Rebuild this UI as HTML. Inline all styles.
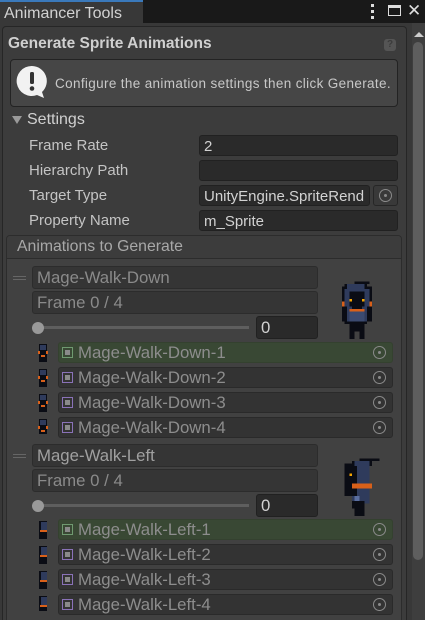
<!DOCTYPE html>
<html style="width:425px;height:620px;overflow:hidden"><head><style>
*{box-sizing:border-box;margin:0;padding:0}
body{width:425px;height:620px;background:#383838;font-family:"Liberation Sans",sans-serif;color:#c4c4c4;position:relative;overflow:hidden;font-size:14px}
.abs{position:absolute}
.tabbar{left:0;top:0;width:425px;height:23px;background:#191919}
.tab{left:0;top:0;width:143px;height:23px;background:#383838;border-top:2px solid #3a79bb;font-size:16px;color:#d2d2d2;padding:3px 0 0 4px}
.fld{position:absolute;background:#2a2a2a;border:1px solid #212121;border-radius:3px;color:#d2d2d2;font-size:15px;padding:2px 0 0 4px;height:21px;white-space:nowrap;overflow:hidden}
.lbl{position:absolute;left:29px;font-size:15px;color:#c4c4c4}
.dis{background:#353535;border-color:#2c2c2c;color:#8a8a8a}
.row{position:absolute;left:58px;width:335px;height:21px;border-radius:3px;background:#333;border:1px solid #2a2a2a;color:#8d8d8d;font-size:16.8px;padding:0 0 0 19px;line-height:19px}
.row.g{background:#394834;border-color:#34412f}
.row .ic{position:absolute;left:3px;top:4px;width:11px;height:11px;border:1px solid #8a72b8}
.row .ic:after{content:"";position:absolute;left:2px;top:2px;width:5px;height:5px;background:#8a8a8a}
.row.g .ic{border-color:#6f9a70}
.tgt{position:absolute;right:6px;top:3px;width:13px;height:13px;border:1.5px solid #8a8a8a;border-radius:50%}
.tgt:after{content:"";position:absolute;left:3.5px;top:3.5px;width:3px;height:3px;background:#8a8a8a;border-radius:50%}
</style></head><body>
<div class="abs tabbar"></div>
<div class="abs tab">Animancer Tools</div>
<div class="abs" style="left:371px;top:4px;width:3px;height:15px;background:repeating-linear-gradient(#ddd 0 3px,transparent 3px 6px)"></div>
<div class="abs" style="left:388px;top:5px;width:13px;height:11px;border:1.5px solid #ddd;border-top-width:3px"></div>
<div class="abs" style="left:407px;top:1px;font-size:17px;color:#ddd">✕</div>

<div class="abs" style="left:2px;top:26px;width:405px;height:594px;background:#3c3c3c;border:1px solid #262626;border-bottom:none;border-radius:4px 4px 0 0"></div>
<div class="abs" style="left:412px;top:23px;width:13px;height:597px;background:#3e3e3e"></div>
<div class="abs" style="left:414px;top:32px;width:0;height:0;border-left:5px solid transparent;border-right:5px solid transparent;border-bottom:5px solid #ccc"></div>
<div class="abs" style="left:413px;top:42px;width:10px;height:518px;background:#5e5e5e;border-radius:5px"></div>

<div class="abs" style="left:8px;top:35px;font-weight:bold;font-size:15.5px;color:#d0d0d0">Generate Sprite Animations</div>
<div class="abs" style="left:384px;top:39px;width:12px;height:12px;border-radius:3px;background:#555;color:#3c3c3c;font-size:10px;text-align:center;font-weight:bold">?</div>

<div class="abs" style="left:10px;top:59px;width:388px;height:48px;background:#464646;border:1px solid #232323;border-radius:4px"></div>
<svg class="abs" style="left:16px;top:65px" width="34" height="36" viewBox="0 0 34 36"><path d="M16 1a15 15 0 1 0 5 29l7 3-2-6A15 15 0 0 0 16 1z" fill="#f2f2f2"/><rect x="14" y="7" width="4" height="12" rx="1.5" fill="#333"/><circle cx="16" cy="23.5" r="2.3" fill="#333"/></svg>
<div class="abs" style="left:55px;top:76px;font-size:13.5px;letter-spacing:0.35px;color:#c8c8c8">Configure the animation settings then click Generate.</div>

<div class="abs" style="left:12px;top:116px;width:0;height:0;border-left:5px solid transparent;border-right:5px solid transparent;border-top:8px solid #9a9a9a"></div>
<div class="abs" style="left:27px;top:111px;font-size:16px;color:#d0d0d0">Settings</div>

<div class="lbl" style="top:137px">Frame Rate</div><div class="fld" style="left:199px;top:135px;width:199px">2</div>
<div class="lbl" style="top:162px">Hierarchy Path</div><div class="fld" style="left:199px;top:160px;width:199px"></div>
<div class="lbl" style="top:187px">Target Type</div><div class="fld" style="left:199px;top:185px;width:171px">UnityEngine.SpriteRend</div>
<div class="abs" style="left:373px;top:185px;width:25px;height:21px;background:#393939;border:1px solid #262626;border-radius:3px"><div class="tgt" style="right:5px;top:3px"></div></div>
<div class="lbl" style="top:212px">Property Name</div><div class="fld" style="left:199px;top:210px;width:199px">m_Sprite</div>

<div class="abs" style="left:6px;top:235px;width:396px;height:385px;background:#414141;border:1px solid #2c2c2c;border-bottom:none;border-radius:4px 4px 0 0"></div>
<div class="abs" style="left:7px;top:236px;width:394px;height:23px;background:#3c3c3c;border-bottom:1px solid #2c2c2c;border-radius:4px 4px 0 0;padding:2px 0 0 10px;font-size:15.8px;color:#a8a8a8">Animations to Generate</div>

<div class="abs" style="left:13px;top:276px;width:13px;height:4px;border-top:1px solid #666;border-bottom:1px solid #666"></div>
<div class="fld dis" style="left:32px;top:266px;width:286px;height:23px;font-size:16.8px;padding-top:1px">Mage-Walk-Down</div>
<div class="fld dis" style="left:32px;top:291px;width:286px;height:23px;font-size:16.8px;padding-top:1px">Frame 0 / 4</div>
<div class="abs" style="left:38px;top:326px;width:211px;height:3px;background:#5e5e5e"></div>
<div class="abs" style="left:32px;top:322px;width:12px;height:12px;border-radius:50%;background:#999"></div>
<div class="fld" style="left:256px;top:316px;width:62px;height:23px;font-size:16.8px;padding-top:1px">0</div>
<svg class="abs" style="left:342px;top:281px" width="30" height="58" viewBox="0 0 12 23" shape-rendering="crispEdges">
<rect x="5" y="0" width="6" height="1" fill="#0a0c14"/><rect x="1" y="1" width="9" height="16" fill="#0a0c14"/><rect x="0" y="2" width="12" height="14" fill="#0a0c14"/>
<rect x="2" y="1" width="7" height="3" fill="#2f3b5c"/><rect x="1" y="3" width="2" height="7" fill="#2f3b5c"/><rect x="9" y="3" width="2" height="7" fill="#2f3b5c"/>
<rect x="3" y="7" width="1" height="1" fill="#f5a500"/><rect x="8" y="7" width="1" height="1" fill="#f5a500"/>
<rect x="0" y="8" width="1" height="2" fill="#d8601a"/><rect x="11" y="8" width="1" height="2" fill="#d8601a"/>
<rect x="2" y="10" width="8" height="6" fill="#2f3b5c"/><rect x="4" y="10" width="4" height="2" fill="#0a0c14"/>
<rect x="3" y="11" width="6" height="1" fill="#d8601a"/><rect x="3" y="12" width="6" height="4" fill="#3b4a70"/>
<rect x="3" y="16" width="2" height="7" fill="#0a0c14"/><rect x="7" y="16" width="2" height="7" fill="#0a0c14"/><rect x="3" y="16" width="6" height="4" fill="#0a0c14"/>
</svg>

<div class="abs" style="left:13px;top:454px;width:13px;height:4px;border-top:1px solid #666;border-bottom:1px solid #666"></div>
<div class="fld dis" style="left:32px;top:444px;width:286px;height:23px;font-size:16.8px;padding-top:1px;color:#a0a0a0">Mage-Walk-Left</div>
<div class="fld dis" style="left:32px;top:469px;width:286px;height:23px;font-size:16.8px;padding-top:1px">Frame 0 / 4</div>
<div class="abs" style="left:38px;top:504px;width:211px;height:3px;background:#5e5e5e"></div>
<div class="abs" style="left:32px;top:500px;width:12px;height:12px;border-radius:50%;background:#999"></div>
<div class="fld" style="left:256px;top:494px;width:62px;height:23px;font-size:16.8px;padding-top:1px">0</div>
<svg class="abs" style="left:342px;top:458px" width="40" height="58" viewBox="0 0 16 23" shape-rendering="crispEdges">
<rect x="7" y="0" width="8" height="1" fill="#0a0c14"/><rect x="4" y="1" width="8" height="2" fill="#0a0c14"/><rect x="1" y="2" width="10" height="13" fill="#0a0c14"/>
<rect x="5" y="1" width="6" height="2" fill="#2f3b5c"/><rect x="6" y="3" width="5" height="15" fill="#2f3b5c"/>
<rect x="3" y="6" width="1" height="1" fill="#f5a500"/><rect x="1" y="4" width="1" height="4" fill="#0a0c14"/>
<rect x="4" y="10" width="8" height="2" fill="#d8601a"/><rect x="4" y="12" width="7" height="6" fill="#2f3b5c"/><rect x="4" y="12" width="2" height="3" fill="#0a0c14"/>
<rect x="5" y="15" width="2" height="2" fill="#5a6ea0"/><rect x="5" y="17" width="4" height="6" fill="#0a0c14"/><rect x="4" y="17" width="1" height="3" fill="#0a0c14"/>
</svg>

<div class="row g" style="top:342px"><span class="ic"></span>Mage-Walk-Down-1<span class="tgt"></span></div>
<div class="row" style="top:367px"><span class="ic"></span>Mage-Walk-Down-2<span class="tgt"></span></div>
<div class="row" style="top:392px"><span class="ic"></span>Mage-Walk-Down-3<span class="tgt"></span></div>
<div class="row" style="top:417px"><span class="ic"></span>Mage-Walk-Down-4<span class="tgt"></span></div>
<div class="row g" style="top:519px"><span class="ic"></span>Mage-Walk-Left-1<span class="tgt"></span></div>
<div class="row" style="top:544px"><span class="ic"></span>Mage-Walk-Left-2<span class="tgt"></span></div>
<div class="row" style="top:569px"><span class="ic"></span>Mage-Walk-Left-3<span class="tgt"></span></div>
<div class="row" style="top:594px"><span class="ic"></span>Mage-Walk-Left-4<span class="tgt"></span></div>

<svg class="abs" style="left:37px;top:344px" width="12" height="90" viewBox="0 0 12 90">
<g id="s"><rect x="2" y="0" width="8" height="18" fill="#0a0c14"/><rect x="3" y="1" width="6" height="5" fill="#2f3b5c"/><rect x="1" y="7" width="2" height="3" fill="#d8601a"/><rect x="9" y="7" width="2" height="3" fill="#d8601a"/><rect x="4" y="11" width="4" height="2" fill="#d8601a"/></g>
<use href="#s" y="25"/><use href="#s" y="50"/><use href="#s" y="75"/>
</svg>
<svg class="abs" style="left:37px;top:521px" width="12" height="90" viewBox="0 0 12 90">
<g id="t"><rect x="2" y="0" width="8" height="18" fill="#0a0c14"/><rect x="4" y="1" width="6" height="8" fill="#2f3b5c"/><rect x="3" y="9" width="7" height="2" fill="#d8601a"/></g>
<use href="#t" y="25"/><use href="#t" y="50"/><use href="#t" y="75"/>
</svg>
</body></html>
